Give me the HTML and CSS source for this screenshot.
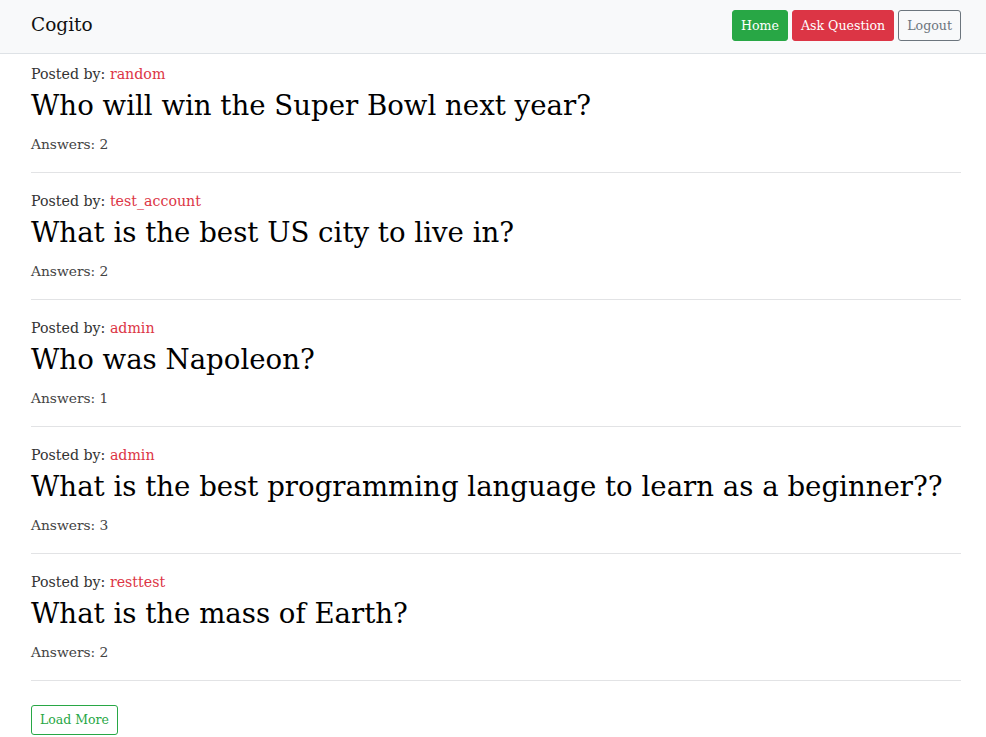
FILE: index.html
```html
<!DOCTYPE html>
<html>
<head>
<meta charset="utf-8">
<link rel="stylesheet" href="styles.css">
</head>
<body>
<nav class="navbar">
  <a class="brand" href="#">Cogito</a>
  <div class="nav-buttons">
    <a class="btn btn-green" href="#">Home</a>
    <a class="btn btn-red" href="#">Ask Question</a>
    <a class="btn btn-outline-grey" href="#">Logout</a>
  </div>
</nav>
<main class="content">
  <div class="question">
    <div class="posted">Posted by: <a class="author" href="#">random</a></div>
    <h2 class="title">Who will win the Super Bowl next year?</h2>
    <div class="answers">Answers: 2</div>
  </div>
  <div class="question">
    <div class="posted">Posted by: <a class="author" href="#">test_account</a></div>
    <h2 class="title">What is the best US city to live in?</h2>
    <div class="answers">Answers: 2</div>
  </div>
  <div class="question">
    <div class="posted">Posted by: <a class="author" href="#">admin</a></div>
    <h2 class="title">Who was Napoleon?</h2>
    <div class="answers">Answers: 1</div>
  </div>
  <div class="question">
    <div class="posted">Posted by: <a class="author" href="#">admin</a></div>
    <h2 class="title">What is the best programming language to learn as a beginner??</h2>
    <div class="answers">Answers: 3</div>
  </div>
  <div class="question">
    <div class="posted">Posted by: <a class="author" href="#">resttest</a></div>
    <h2 class="title">What is the mass of Earth?</h2>
    <div class="answers">Answers: 2</div>
  </div>
  <div class="more-row">
    <a class="btn btn-outline-green" href="#">Load More</a>
  </div>
</main>
</body>
</html>
```
FILE: styles.css
```css
* { box-sizing: border-box; }
html, body { margin: 0; padding: 0; }
body {
  font-family: "DejaVu Serif", "Liberation Serif", serif;
  color: #212529;
  background: #fff;
  font-size: 14px;
  line-height: 1.5;
}
a { text-decoration: none; }
.navbar {
  height: 54px;
  background: #f8f9fa;
  border-bottom: 1px solid #dee2e6;
  display: flex;
  align-items: center;
  justify-content: space-between;
  padding: 0 25px 3px 31px;
}
.brand {
  color: #111;
  font-size: 18.5px;
}
.nav-buttons {
  display: flex;
  gap: 4px;
}
.btn {
  display: inline-block;
  font-size: 12.6px;
  line-height: 21px;
  padding: 4px 8px;
  border: 1px solid transparent;
  border-radius: 3px;
}
.btn-green { background: #28a745; border-color: #28a745; color: #fff; }
.btn-red { background: #dc3545; border-color: #dc3545; color: #fff; }
.btn-outline-grey { border-color: #6c757d; color: #6c757d; background: transparent; }
.btn-outline-green { border-color: #28a745; color: #28a745; background: transparent; font-size: 12.5px; line-height: 20px; }
.content {
  padding: 8px 25px 0 31px;
}
.question {
  border-bottom: 1px solid #e2e3e5;
  padding-bottom: 16px;
  margin-bottom: 16px;
}
.posted {
  color: #333;
  font-size: 14.2px;
  line-height: 24px;
}
.author { color: #dc3545; }
.title {
  margin: 1px 0 0;
  font-weight: normal;
  font-size: 27.6px;
  line-height: 38px;
  color: #000;
}
.answers {
  color: #444;
  font-size: 13.8px;
  line-height: 24px;
  margin-top: 7px;
}
.more-row { padding-top: 8px; }
```
